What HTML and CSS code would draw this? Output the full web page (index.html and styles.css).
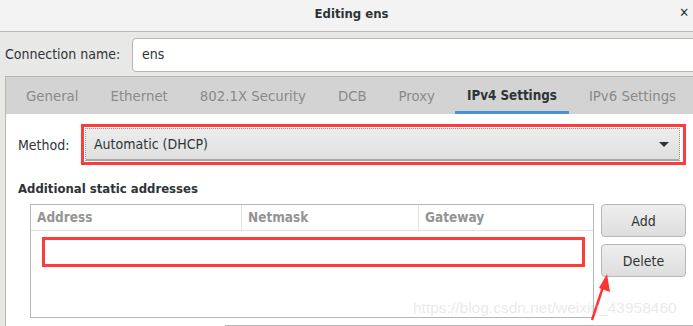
FILE: index.html
```html
<!DOCTYPE html>
<html lang="en">
<head>
  <meta charset="UTF-8" />
  <title>Editing ens</title>
  <link rel="stylesheet" href="styles.css">
</head>
<body>

  <!-- Window title bar -->
  <div class="titlebar">
    <span class="title">Editing ens</span>
    <span class="close">✕</span>
  </div>

  <div class="window">
    <div class="name-row">
      <label>Connection name:</label>
      <div class="entry">ens</div>
    </div>

    <div class="notebook">
      <div class="tabs">
        <div class="tab">General</div>
        <div class="tab">Ethernet</div>
        <div class="tab">802.1X Security</div>
        <div class="tab">DCB</div>
        <div class="tab">Proxy</div>
        <div class="tab active">IPv4 Settings</div>
        <div class="tab">IPv6 Settings</div>
      </div>

      <div class="page">
        <div class="method-row">
          <label>Method:</label>
          <div class="mark">
            <div class="combo">
              <span>Automatic (DHCP)</span>
              <span class="arrow"></span>
            </div>
          </div>
        </div>

        <div class="heading">Additional static addresses</div>

        <div class="addresses">
          <div class="table">
            <div class="thead">
              <div class="col c1">Address</div>
              <div class="col c2">Netmask</div>
              <div class="col c3">Gateway</div>
            </div>
            <div class="row-mark"></div>
          </div>
          <div class="side-buttons">
            <button>Add</button>
            <button>Delete</button>
          </div>
        </div>

        <div class="bottom-line"></div>
      </div>
    </div>
  </div>

  <!-- screenshot annotations -->
  <svg class="arrow-note" width="40" height="60" viewBox="0 0 40 60">
    <line x1="4" y1="58" x2="16" y2="22" stroke="#f33" stroke-width="2.5"/>
    <polygon points="19,12 22,30 11,26" fill="#f33"/>
  </svg>
  <div class="watermark">https://blog.csdn.net/weixin_43958460</div>

</body>
</html>
```

FILE: styles.css
```css
* { box-sizing: border-box; }

body {
  margin: 0;
  width: 693px;
  height: 326px;
  overflow: hidden;
  background: #e8e8e7;
  font-family: 'DejaVu Sans Condensed', 'DejaVu Sans', sans-serif;
  font-stretch: condensed;
  font-size: 14px;
  color: #2e3436;
  position: relative;
  white-space: nowrap;
}

.titlebar {
  height: 32px;
  background: #f3f3f3;
  border-bottom: 1px solid #b8b8b8;
  display: flex;
  align-items: center;
  justify-content: center;
  padding-left: 10px;
  position: relative;
}

.title {
  font-weight: bold;
  font-size: 13px;
  margin-top: -5px;
}

.close {
  position: absolute;
  right: 4px;
  top: 5px;
  font-size: 13px;
  font-weight: bold;
  color: #2e3436;
}

.window {
  width: 740px;
}

.name-row {
  display: flex;
  align-items: center;
  height: 44px;
  padding-left: 5px;
}

.name-row label {
  width: 127px;
}

.entry {
  flex: 1;
  height: 34px;
  margin-top: 1px;
  background: #fff;
  border: 1px solid #b6b6b3;
  border-radius: 4px;
  padding: 7px 9px;
}

.notebook {
  margin-left: 5px;
  border-left: 1px solid #b6b6b3;
  border-top: 1px solid #b6b6b3;
}

.tabs {
  display: flex;
  height: 37px;
  background: #d3d3d3;
  padding-left: 4px;
}

.tab {
  padding: 3px 12px 0;
  margin: 0 4px;
  display: flex;
  align-items: center;
  color: #8a8a8a;
  font-size: 14.8px;
  border-bottom: 3px solid transparent;
}

.tab.active {
  color: #2e3436;
  font-weight: bold;
  font-size: 13.3px;
  border-bottom-color: #4a90d9;
}

.page {
  background: #fff;
  padding: 10px 0 0 12px;
  height: 220px;
}

.method-row {
  display: flex;
  align-items: center;
}

.method-row label {
  width: 63px;
}

.mark {
  border: 3px solid #ff3b3b;
  padding: 1px 3px 1px 1px;
  width: 605px;
}

.combo {
  height: 33px;
  border: 1px dotted #9a9a9a;
  background: linear-gradient(#ececec, #e0e0e0);
  border-bottom: 2px solid #a8a8a8;
  display: flex;
  align-items: center;
  justify-content: space-between;
  padding: 0 10px 0 8px;
}

.arrow {
  width: 0;
  height: 0;
  border-left: 5px solid transparent;
  border-right: 5px solid transparent;
  border-top: 5px solid #2e3436;
}

.heading {
  font-weight: bold;
  font-size: 13px;
  margin-top: 16px;
}

.addresses {
  display: flex;
  gap: 7px;
  margin: 8px 0 0 12px;
}

.table {
  width: 564px;
  height: 114px;
  border: 1px solid #b6b6b6;
}

.thead {
  display: flex;
  height: 26px;
  border-bottom: 1px solid #e2e2e2;
}

.col {
  color: #949494;
  font-weight: bold;
  font-size: 13.5px;
  padding: 4px 6px;
}

.c1 { width: 211px; border-right: 1px solid #e2e2e2; }
.c2 { width: 177px; border-right: 1px solid #e2e2e2; }
.c3 { flex: 1; }

.row-mark {
  margin: 6px 8px 0 11px;
  height: 30px;
  border: 3px solid #ff3b3b;
}

.side-buttons {
  display: flex;
  flex-direction: column;
  gap: 7px;
}

.side-buttons button {
  width: 85px;
  height: 33px;
  border: 1px solid #b6b6b3;
  border-radius: 4px;
  background: linear-gradient(#eeeeee, #dedede);
  font-family: inherit;
  font-stretch: condensed;
  font-size: 14px;
  color: #2e3436;
}

.bottom-line {
  margin: 7px 0 0 207px;
  width: 472px;
  border-top: 1px solid #b6b6b6;
}

.arrow-note {
  position: absolute;
  left: 588px;
  top: 262px;
}

.watermark {
  position: absolute;
  left: 413px;
  top: 299px;
  font-family: 'Liberation Sans', sans-serif;
  font-stretch: normal;
  font-size: 15.5px;
  color: rgba(200, 200, 200, 0.4);
}
```
